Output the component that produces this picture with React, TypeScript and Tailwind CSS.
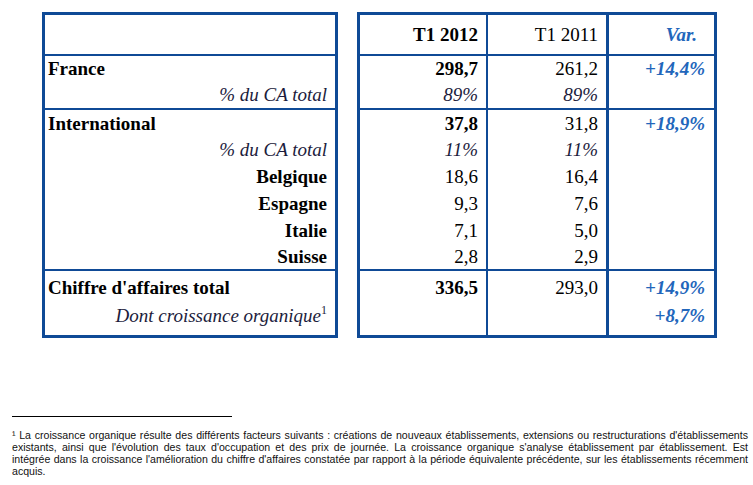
import React from "react";

const serif = { fontFamily: '"Liberation Serif", "DejaVu Serif", serif' };

type RowDef = {
  h: string; // total height incl. borders
  pad?: string;
  top?: boolean;
  bottom?: "b2" | "b3";
  label?: React.ReactNode;
  labelCls?: string;
  v1?: string;
  v1Cls?: string;
  v2?: string;
  v2Cls?: string;
  v3?: string;
  v3Cls?: string;
};

const BOLD = "font-bold";
const ITAL = "italic text-[#1c1c3c]";
const BLUE = "italic font-bold text-[#2266bb]";
const L_LEFT = "justify-start pl-[3px] font-bold";
const L_RIGHT = "justify-end pr-[8px]";

function TRow({ r }: { r: RowDef }) {
  const edge = `${r.top ? "border-t-[3px]" : ""} ${
    r.bottom === "b2" ? "border-b-2" : r.bottom === "b3" ? "border-b-[3px]" : ""
  } border-[#0f4a96]`;
  const cell = `${r.h} ${r.pad ?? ""} flex items-center ${edge}`;
  return (
    <div className="flex">
      <div className={`${cell} w-[296px] border-l-[3px] border-r-[3px] ${r.labelCls ?? ""}`}>
        {r.label}
      </div>
      <div className="w-[19px] shrink-0" />
      <div className={`${cell} w-[131px] justify-end pr-[8px] border-l-[3px] border-r-2 ${r.v1Cls ?? ""}`}>
        {r.v1}
      </div>
      <div className={`${cell} w-[121px] justify-end pr-[8px] border-r-[3px] ${r.v2Cls ?? ""}`}>
        {r.v2}
      </div>
      <div className={`${cell} w-[108px] justify-end pr-[9px] border-r-[3px] ${r.v3Cls ?? ""}`}>
        {r.v3}
      </div>
    </div>
  );
}

const rows: RowDef[] = [
  { h: "h-[44px]", top: true, bottom: "b2", v1: "T1 2012", v1Cls: BOLD, v2: "T1 2011", v3: "Var.", v3Cls: `${BLUE} pr-[17px]` },
  { h: "h-[26px]", pad: "pb-[1px]", label: "France", labelCls: L_LEFT, v1: "298,7", v1Cls: BOLD, v2: "261,2", v3: "+14,4%", v3Cls: BLUE },
  { h: "h-[28px]", pad: "pb-[1px]", bottom: "b2", label: "% du CA total", labelCls: `${L_RIGHT} ${ITAL}`, v1: "89%", v1Cls: ITAL, v2: "89%", v2Cls: ITAL },
  { h: "h-[26px]", pad: "pt-[1px]", label: "International", labelCls: L_LEFT, v1: "37,8", v1Cls: BOLD, v2: "31,8", v3: "+18,9%", v3Cls: BLUE },
  { h: "h-[26px]", pad: "pt-[1px]", label: "% du CA total", labelCls: `${L_RIGHT} ${ITAL}`, v1: "11%", v1Cls: ITAL, v2: "11%", v2Cls: ITAL },
  { h: "h-[27px]", pad: "pt-[1px]", label: "Belgique", labelCls: `${L_RIGHT} font-bold`, v1: "18,6", v2: "16,4" },
  { h: "h-[27px]", pad: "pt-[1px]", label: "Espagne", labelCls: `${L_RIGHT} font-bold`, v1: "9,3", v2: "7,6" },
  { h: "h-[27px]", pad: "pt-[1px]", label: "Italie", labelCls: `${L_RIGHT} font-bold`, v1: "7,1", v2: "5,0" },
  { h: "h-[28px]", pad: "pt-[1px]", bottom: "b2", label: "Suisse", labelCls: `${L_RIGHT} font-bold`, v1: "2,8", v2: "2,9" },
  { h: "h-[30px]", pad: "pt-[2px]", label: "Chiffre d'affaires total", labelCls: L_LEFT, v1: "336,5", v1Cls: BOLD, v2: "293,0", v3: "+14,9%", v3Cls: BLUE },
  {
    h: "h-[37px]",
    pad: "pb-[6px]",
    bottom: "b3",
    label: (
      <>
        Dont croissance organique
        <span className="not-italic text-[12px] relative -top-[5px]">1</span>
      </>
    ),
    labelCls: `${L_RIGHT} ${ITAL}`,
    v3: "+8,7%",
    v3Cls: `${BLUE} pr-[6px]`,
  },
];

const noteLines = [
  "¹ La croissance organique résulte des différents facteurs suivants : créations de nouveaux établissements, extensions ou restructurations d'établissements",
  "existants, ainsi que l'évolution des taux d'occupation et des prix de journée. La croissance organique s'analyse établissement par établissement. Est",
  "intégrée dans la croissance l'amélioration du chiffre d'affaires constatée par rapport à la période équivalente précédente, sur les établissements récemment",
];

export default function App() {
  return (
    <div className="w-[753px] h-[485px] bg-white text-black" style={serif}>
      <div className="pt-[12px] pl-[42px] text-[19px] leading-none">
        {rows.map((r, i) => (
          <TRow key={i} r={r} />
        ))}
      </div>

      {/* Footnote */}
      <div className="mt-[78px] ml-[12px] w-[220px] h-px bg-black" />
      <div
        className="ml-[12px] mt-[12px] w-[736px] text-[10.6px] leading-[12px] text-[#111]"
        style={{ fontFamily: '"Liberation Sans", Arial, sans-serif' }}
      >
        {noteLines.map((l, i) => (
          <p key={i} className="text-justify [text-align-last:justify] whitespace-nowrap">
            {l}
          </p>
        ))}
        <p>acquis.</p>
      </div>
    </div>
  );
}
